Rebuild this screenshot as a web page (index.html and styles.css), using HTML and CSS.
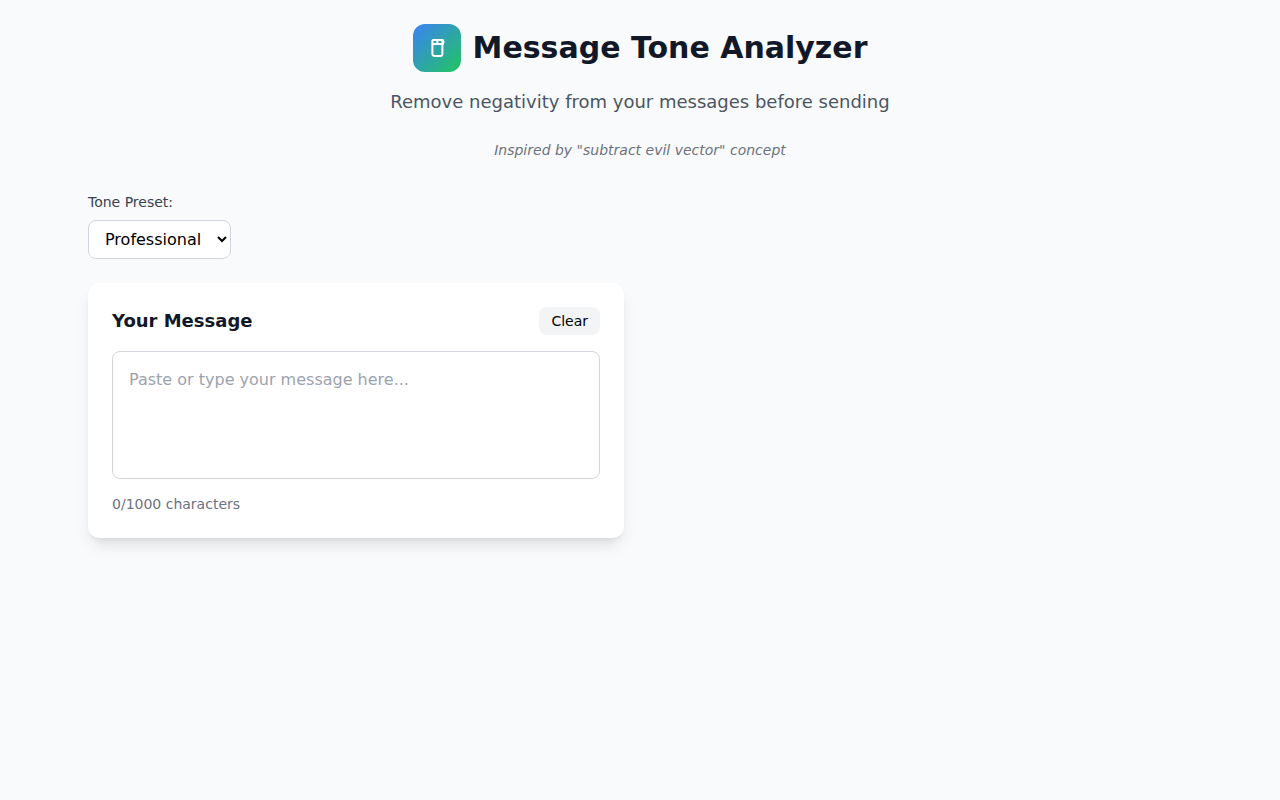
FILE: index.html
```
<!DOCTYPE html>
<html lang="en">
<head>
    <meta charset="UTF-8">
    <meta name="viewport" content="width=device-width, initial-scale=1.0">
    <title>Message Tone Analyzer</title>
    <link rel="stylesheet" href="styles.css">
</head>
<body>

    <div class="container">
        <header class="header">
            <div class="brand">
                <div class="logo">
                    <svg width="24" height="24" viewBox="0 0 24 24" fill="none" stroke="currentColor" stroke-width="2" stroke-linecap="round" stroke-linejoin="round" aria-hidden="true">
                        <path d="M7.4 8h10M7.4 8V5a1 1 0 0 1 1-1h9a1 1 0 0 1 1 1v2a1 1 0 0 1-1 1M7.4 8v10a2 2 0 0 0 2 2h6a2 2 0 0 0 2-2V5M12.4 4v4"/>
                    </svg>
                </div>
                <h1>Message Tone Analyzer</h1>
            </div>
            <p class="subtitle">Remove negativity from your messages before sending</p>
            <p class="note">Inspired by "subtract evil vector" concept</p>
        </header>

        <div class="preset">
            <label for="tone">Tone Preset:</label>
            <select id="tone">
                <option>Professional</option>
                <option>Friendly</option>
                <option>Casual</option>
            </select>
        </div>

        <main class="panels">
            <section class="card">
                <div class="card-header">
                    <h2>Your Message</h2>
                    <button type="button" class="clear">Clear</button>
                </div>
                <textarea id="message" maxlength="1000" placeholder="Paste or type your message here..." aria-label="Your Message"></textarea>
                <div class="counter"><span id="count">0</span>/1000 characters</div>
            </section>
        </main>
    </div>

    <script>
        const message = document.getElementById('message');
        const count = document.getElementById('count');

        function updateCount() {
            count.textContent = message.value.length;
        }

        message.addEventListener('input', updateCount);
        document.querySelector('.clear').addEventListener('click', () => {
            message.value = '';
            updateCount();
        });
    </script>

</body>
</html>
```
FILE: styles.css
```
* { box-sizing: border-box; margin: 0; padding: 0; }

body {
    font-family: "DejaVu Sans", sans-serif;
    font-size: 16px;
    line-height: 24px;
    color: #111827;
    background: #f9fafb;
}

.container {
    max-width: 1152px;
    margin: 0 auto;
    padding: 24px;
}

.header { text-align: center; margin-bottom: 32px; }

.brand {
    display: flex;
    align-items: center;
    justify-content: center;
    gap: 12px;
    margin-bottom: 16px;
}

.logo {
    display: flex;
    align-items: center;
    justify-content: center;
    width: 48px;
    height: 48px;
    color: white;
    background: linear-gradient(to bottom right, #3b82f6, #22c55e);
    border-radius: 12px;
}

h1 { font-size: 30px; line-height: 36px; }
h2 { font-size: 18px; line-height: 28px; }

.subtitle {
    font-size: 18px;
    line-height: 28px;
    color: #4b5563;
    margin-bottom: 24px;
}

.note {
    font-size: 14px;
    line-height: 20px;
    font-style: italic;
    color: #6b7280;
}

.preset {
    display: flex;
    flex-direction: column;
    align-items: flex-start;
    gap: 8px;
    margin-bottom: 24px;
}

.preset label { font-size: 14px; line-height: 20px; color: #374151; }

select {
    font: inherit;
    color: black;
    padding: 8px 12px;
    background: white;
    border: 1px solid #d1d5db;
    border-radius: 8px;
}

.panels {
    display: grid;
    grid-template-columns: 1fr 1fr;
    gap: 32px;
}

.card {
    padding: 24px;
    background: white;
    border-radius: 12px;
    box-shadow: 0 10px 15px -3px rgba(0, 0, 0, 0.1), 0 4px 6px -4px rgba(0, 0, 0, 0.1);
}

.card-header {
    display: flex;
    align-items: center;
    justify-content: space-between;
    margin-bottom: 16px;
}

.clear {
    font: inherit;
    font-size: 14px;
    line-height: 20px;
    color: black;
    padding: 4px 12px;
    background: #f3f4f6;
    border: none;
    border-radius: 8px;
    cursor: pointer;
}

textarea {
    width: 100%;
    height: 128px;
    padding: 16px;
    font: inherit;
    border: 1px solid #d1d5db;
    border-radius: 8px;
    resize: none;
}

textarea::placeholder { color: #9ca3af; }

.counter {
    font-size: 14px;
    line-height: 20px;
    color: #6b7280;
    margin-top: 8px;
}

@media (max-width: 768px) {
    .panels { grid-template-columns: 1fr; }
}
```
